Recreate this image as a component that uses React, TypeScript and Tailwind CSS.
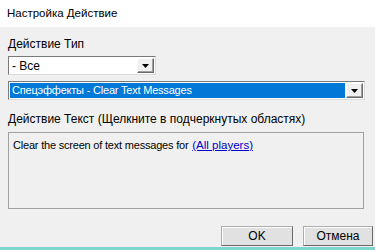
import React from "react";

function Arrow() {
  return (
    <svg width="7" height="4" viewBox="0 0 7 4">
      <path d="M0 0H7L3.5 4Z" fill="#000" />
    </svg>
  );
}

function DropBtn() {
  return (
    <div className="flex h-full w-[17px] items-center justify-center border-t border-l border-t-white border-l-white border-r border-b border-r-[#696969] border-b-[#696969] bg-[#f0f0f0] shadow-[inset_-1px_-1px_0_#a0a0a0]">
      <Arrow />
    </div>
  );
}

export default function App() {
  return (
    <div
      className="flex h-[250px] w-[375px] flex-col overflow-hidden bg-[#f0f0f0] text-[12px] text-black"
      style={{ fontFamily: '"Liberation Sans", Arial, sans-serif' }}
    >
      <div className="flex h-[27px] shrink-0 items-center bg-white pl-[7px] text-[11.5px]">
        Настройка Действие
      </div>
      <div className="flex flex-1 flex-col px-[8px] pt-[10px]">
        <div className="h-[15px] leading-[15px]">Действие Тип</div>
        <div className="mt-[4px] flex h-[19px] w-[148px] items-stretch border border-[#7a7a7a] border-r-[#dcdcdc] border-b-[#dcdcdc] bg-white p-[1px]">
          <div className="flex flex-1 items-center pl-[2px]">- Все</div>
          <DropBtn />
        </div>
        <div className="mt-[6px] flex h-[19px] w-[357px] items-stretch border border-[#7a7a7a] border-r-[#dcdcdc] border-b-[#dcdcdc] bg-white p-[1px]">
          <div className="mr-[1px] flex flex-1 items-center bg-[#0078d7] pl-[2px] text-[11px] tracking-[-0.2px] text-white">
            Спецэффекты - Clear Text Messages
          </div>
          <DropBtn />
        </div>
        <div className="mt-[12px] h-[15px] leading-[15px]">
          Действие Текст (Щелкните в подчеркнутых областях)
        </div>
        <div className="mt-[5px] h-[77px] w-[356px] border border-[#a0a0a0] px-[4px] pt-[5px] text-[11px] leading-[14px] tracking-[-0.2px]">
          Clear the screen of text messages for{" "}
          <span className="ml-[1px] text-[11.5px] tracking-normal text-[#0000cc] underline">(All players)</span>
        </div>
        <div className="mt-[17px] flex justify-end gap-[10px]">
          <div className="flex h-[20px] w-[72px] items-center justify-center border border-[#adadad] border-r-[#696969] border-b-[#696969] bg-[#e1e1e1] shadow-[inset_1px_1px_0_#fff]">
            OK
          </div>
          <div className="mr-[-6px] flex h-[20px] w-[70px] items-center justify-center border border-[#adadad] border-r-[#696969] border-b-[#696969] bg-[#e1e1e1] shadow-[inset_1px_1px_0_#fff]">
            Отмена
          </div>
        </div>
      </div>
      <div className="h-[3px] shrink-0 bg-[#7fd6cf]" />
    </div>
  );
}
